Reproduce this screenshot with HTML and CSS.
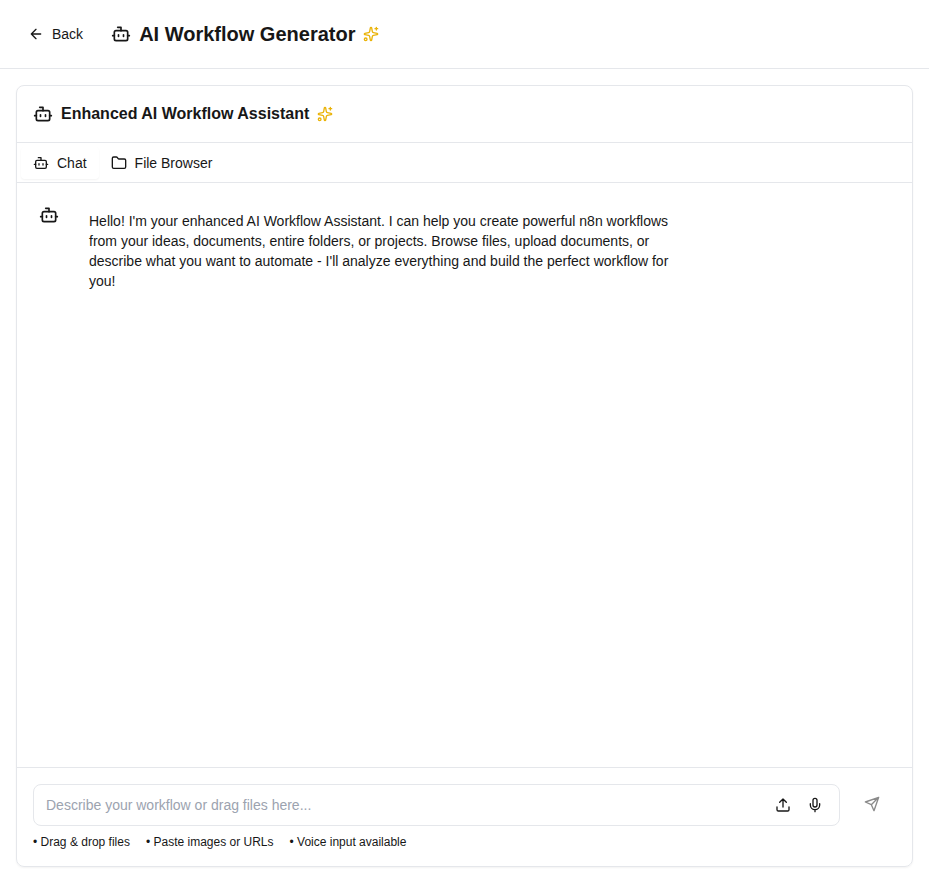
FILE: index.html
```html
<!DOCTYPE html>
<html lang="en">
<head>
<meta charset="utf-8">
<title>AI Workflow Generator</title>
<link rel="stylesheet" href="styles.css">
</head>
<body>
<svg class="defs" aria-hidden="true">
  <symbol id="bot" viewBox="0 0 24 24"><path d="M12 8V4H8"/><rect width="16" height="12" x="4" y="8" rx="2"/><path d="M2 14h2M20 14h2M15 13v2M9 13v2"/></symbol>
  <symbol id="sparkles" viewBox="0 0 24 24"><path d="M11.017 2.814a1 1 0 0 1 1.966 0l1.051 5.558a2 2 0 0 0 1.594 1.594l5.558 1.051a1 1 0 0 1 0 1.966l-5.558 1.051a2 2 0 0 0-1.594 1.594l-1.051 5.558a1 1 0 0 1-1.966 0l-1.051-5.558a2 2 0 0 0-1.594-1.594l-5.558-1.051a1 1 0 0 1 0-1.966l5.558-1.051a2 2 0 0 0 1.594-1.594z"/><path d="M20 2v4M22 4h-4"/><circle cx="4" cy="20" r="2"/></symbol>
</svg>
<header class="topbar">
  <button class="back">
    <svg class="icon" viewBox="0 0 24 24"><path d="m12 19-7-7 7-7M19 12H5"/></svg>
    Back
  </button>
  <div class="heading">
    <svg class="icon large"><use href="#bot"/></svg>
    <h1>AI Workflow Generator</h1>
    <svg class="icon gold"><use href="#sparkles"/></svg>
  </div>
</header>
<main>
  <section class="card">
    <div class="card-header heading">
      <svg class="icon large"><use href="#bot"/></svg>
      <h2>Enhanced AI Workflow Assistant</h2>
      <svg class="icon gold"><use href="#sparkles"/></svg>
    </div>
    <nav class="tabs">
      <button class="tab active"><svg class="icon"><use href="#bot"/></svg>Chat</button>
      <button class="tab"><svg class="icon" viewBox="0 0 24 24"><path d="M20 20a2 2 0 0 0 2-2V8a2 2 0 0 0-2-2h-7.9a2 2 0 0 1-1.69-.9L9.6 3.9A2 2 0 0 0 7.93 3H4a2 2 0 0 0-2 2v13a2 2 0 0 0 2 2Z"/></svg>File Browser</button>
    </nav>
    <div class="messages">
      <div class="message">
        <div class="avatar"><svg class="icon large"><use href="#bot"/></svg></div>
        <p>Hello! I'm your enhanced AI Workflow Assistant. I can help you create powerful n8n workflows from your ideas, documents, entire folders, or projects. Browse files, upload documents, or describe what you want to automate - I'll analyze everything and build the perfect workflow for you!</p>
      </div>
    </div>
    <footer class="composer">
      <div class="row">
        <div class="field">
          <input type="text" placeholder="Describe your workflow or drag files here...">
          <svg class="icon" viewBox="0 0 24 24"><path d="M21 15v4a2 2 0 0 1-2 2H5a2 2 0 0 1-2-2v-4M17 8l-5-5-5 5M12 3v12"/></svg>
          <svg class="icon" viewBox="0 0 24 24"><path d="M12 2a3 3 0 0 0-3 3v7a3 3 0 0 0 6 0V5a3 3 0 0 0-3-3ZM19 10v2a7 7 0 0 1-14 0v-2M12 19v3"/></svg>
        </div>
        <button class="send" disabled><svg class="icon" viewBox="0 0 24 24"><path d="m22 2-7 20-4-9-9-4ZM22 2 11 13"/></svg></button>
      </div>
      <div class="hints"><span>• Drag &amp; drop files</span><span>• Paste images or URLs</span><span>• Voice input available</span></div>
    </footer>
  </section>
</main>
</body>
</html>
```
FILE: styles.css
```css
* { box-sizing: border-box; margin: 0; }
body {
  height: 100vh;
  display: flex;
  flex-direction: column;
  background: #fff;
  color: #171717;
  font: 14px/20px "Liberation Sans", Arial, sans-serif;
  overflow: hidden;
}
button, input { font: inherit; color: inherit; background: none; border: 0; padding: 0; }
.defs { display: none; }
.icon {
  width: 16px;
  height: 16px;
  flex: none;
  fill: none;
  stroke: currentColor;
  stroke-width: 2;
  stroke-linecap: round;
  stroke-linejoin: round;
}
.large { width: 20px; height: 20px; }
.gold { color: #eab308; }
.topbar {
  height: 69px;
  flex: none;
  display: flex;
  align-items: center;
  gap: 16px;
  padding: 0 16px;
  border-bottom: 1px solid #e5e7eb;
}
.back { display: flex; align-items: center; gap: 8px; height: 36px; padding: 0 12px; }
.heading { display: flex; align-items: center; gap: 8px; }
h1 { font-size: 20px; line-height: 28px; }
h2 { font-size: 16px; line-height: 24px; }
main { flex: 1; display: flex; padding: 16px; min-height: 0; }
.card {
  flex: 1;
  display: flex;
  flex-direction: column;
  border: 1px solid #e5e7eb;
  border-radius: 8px;
  box-shadow: 0 1px 2px rgba(0, 0, 0, .05);
}
.card-header { height: 57px; padding: 0 16px; border-bottom: 1px solid #e5e7eb; }
.tabs { display: flex; height: 40px; padding: 4px 4px 3px; border-bottom: 1px solid #e5e7eb; }
.tab { display: flex; align-items: center; gap: 8px; padding: 0 12px; border-radius: 4px; }
.active { box-shadow: 0 1px 2px rgba(0, 0, 0, .05); }
.messages { flex: 1; padding: 16px; }
.message { display: flex; gap: 12px; }
.avatar { width: 32px; height: 32px; display: grid; place-items: center; }
.message p { width: 608px; padding: 12px; }
.composer { height: 99px; padding: 16px; border-top: 1px solid #e5e7eb; }
.row { display: flex; gap: 8px; }
.field {
  flex: 1;
  display: flex;
  align-items: center;
  gap: 16px;
  height: 42px;
  padding: 0 16px 0 12px;
  border: 1px solid #e5e7eb;
  border-radius: 8px;
}
.field input { flex: 1; min-width: 0; outline: 0; }
.field input::placeholder { color: #9ca3af; opacity: 1; }
.send { width: 48px; height: 40px; display: grid; place-items: center; opacity: .5; }
.hints { display: flex; gap: 16px; margin-top: 8px; font-size: 12px; line-height: 16px; }
```
